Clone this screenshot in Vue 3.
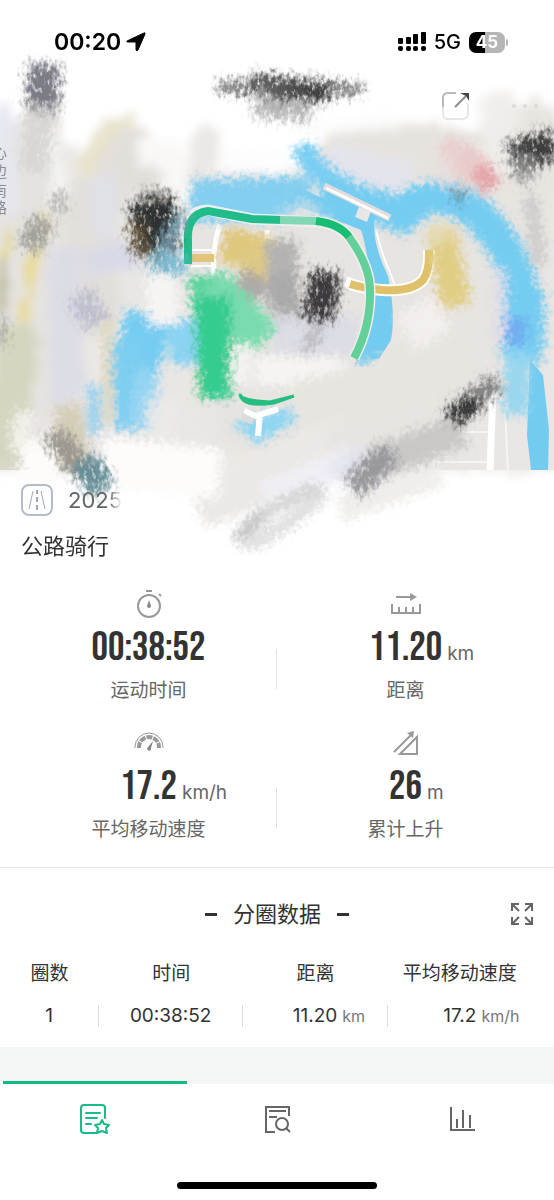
<script setup>
import { ref } from 'vue'

const activeTab = ref('detail')

const tabs = [
  { id: 'detail', name: '详情' },
  { id: 'review', name: '分析' },
  { id: 'chart', name: '图表' },
]

const metrics = [
  { icon: 'timer', value: '00:38:52', unit: '', label: '运动时间' },
  { icon: 'distance', value: '11.20', unit: 'km', label: '距离' },
  { icon: 'speed', value: '17.2', unit: 'km/h', label: '平均移动速度' },
  { icon: 'ascent', value: '26', unit: 'm', label: '累计上升' },
]

const laps = ref([
  { no: 1, time: '00:38:52', distance: '11.20', speed: '17.2' },
])

// wide washes below the map lines: d, color, width, opacity
const washes = [
  ['M20 150 L16 420', '#e5e3e2', 60, 1],
  ['M42 120 L50 400', '#e5e3e0', 40, 1],
  ['M3 120 L4 200', '#e6e7ef', 26, 0.9],
  ['M126 155 Q100 190 92 300', '#e2dfdb', 70, 1],
  ['M112 130 Q135 128 146 142', '#e2dfdc', 20, 0.9],
  ['M86 170 Q98 132 126 122', '#e9e4cb', 18, 0.8],
  ['M104 186 L104 222', '#e0e1ec', 30, 0.7],
  ['M150 220 L150 420', '#e9e7e4', 60, 1],
  ['M345 160 Q420 138 490 175', '#e6e3df', 60, 1],
  ['M340 166 L395 176', '#e3e3ed', 38, 0.9],
  ['M530 140 L500 260 L500 400', '#e8e5e1', 80, 1],
  ['M500 112 L500 155', '#efedea', 40, 0.9],
  ['M180 370 L190 450', '#e9e7e4', 60, 1],
  ['M240 270 L450 270 L450 390 L260 400 Z', '#e7e4e1', 100, 1],
  ['M18 340 L8 440', '#d2d4bd', 40, 0.9],
  ['M64 260 L68 390', '#dcdce6', 34, 0.9],
  ['M98 262 L128 256', '#d8d9e8', 28, 0.9],
  ['M34 250 L22 320', '#e5d995', 9, 1],
  ['M46 215 L22 318', '#eadc8b', 7, 0.8],
  ['M12 228 L2 262', '#e6d87f', 10, 0.9],
  ['M2 260 L2 310', '#a9a574', 8, 0.8],
  ['M48 130 Q62 170 54 205', '#f8f7f6', 12, 0.8],
  ['M150 150 Q180 150 180 190', '#f9f8f7', 30, 1],
  ['M165 120 Q240 100 290 150', '#ffffff', 44, 1],
  ['M230 160 L280 164', '#fdfdfd', 24, 1],
  ['M206 140 L202 176', '#e9e6e3', 28, 0.9],
  ['M300 130 L400 120', '#fdfdfd', 16, 0.8],
]

const paint = [
  ['M108 315 L108 425', '#ddd7bb', 10, 0.9],
  ['M94 385 L94 435', '#8dcdf0', 12, 0.9],
  ['M148 314 L134 385', '#74ccf1', 46, 1],
  ['M128 340 L132 430', '#7bcef1', 32, 1],
  ['M150 370 L140 430', '#9bd6f2', 28, 0.8],
  ['M184 320 L188 370', '#80d0f2', 34, 0.9],
  ['M160 275 L164 325', '#f5f4f3', 30, 1],
  ['M178 365 L180 470', '#e9e6e3', 40, 1],
  ['M160 400 L160 460', '#eceae8', 30, 0.8],
  ['M302 145 Q316 180 352 190', '#78cdf2', 22, 1],
  ['M192 191 L310 187', '#83cdef', 22, 1],
  ['M190 206 L290 206', '#83cff1', 30, 1],
  ['M280 217 L306 205 L330 220', '#c8dde6', 12, 0.8],
  ['M320 196 Q370 202 398 214 Q430 190 460 202 Q508 230 524 300', '#75ccf1', 34, 1],
  ['M396 204 L418 224', '#75ccf1', 34, 1],
  ['M522 290 Q526 330 520 360', '#75ccf1', 42, 1],
  ['M518 350 L516 415', '#91d5f1', 26, 0.9],
  ['M514 318 L512 345', '#6ea5f3', 26, 0.8],
  ['M500 270 L500 345', '#dedde8', 12, 0.9],
  ['M222 244 L272 256', '#e0c77e', 36, 1],
  ['M258 250 L252 282', '#deca84', 26, 1],
  ['M440 228 L456 306', '#e1ce85', 30, 1],
  ['M430 226 L446 240', '#e5dcb9', 24, 0.8],
  ['M240 276 L262 296', '#a7a4a3', 26, 0.9],
  ['M281 240 L284 312', '#b4b3b2', 32, 1],
  ['M280 274 L292 326', '#a8a7a7', 28, 0.8],
  ['M272 334 L360 336', '#dcdbe6', 40, 0.9],
  ['M256 370 L345 374', '#f5f4f2', 30, 1],
  ['M204 276 L210 310', '#54d39a', 32, 1],
  ['M210 284 L264 342', '#79dbae', 40, 1],
  ['M212 296 L216 398', '#35cc90', 36, 1],
  ['M242 345 L240 386', '#f3f2f0', 20, 1],
  ['M414 306 L434 340', '#f3f0ed', 44, 0.9],
  ['M296 420 L470 372', '#e8e5e1', 74, 1],
  ['M196 504 L350 440', '#ebe8e5', 52, 1],
  ['M330 455 L440 425', '#e7e4e1', 54, 1],
  ['M265 496 L355 458', '#f0eff4', 28, 1],
  ['M340 510 L440 474', '#eeebe8', 24, 0.9],
  ['M350 474 L462 430', '#c6c4c4', 34, 0.9],
  ['M334 476 L364 452', '#e4e4ee', 26, 0.9],
  ['M238 538 Q265 508 320 486', '#cfcfcf', 12, 0.9],
  ['M246 546 Q286 530 326 490', '#dcdcdc', 14, 0.9],
  ['M20 462 L60 462', '#fdfcfb', 44, 1],
  ['M100 462 L220 474', '#fdfcfb', 50, 1],
  ['M26 410 L18 450', '#f6f5f1', 20, 0.8],
  ['M68 405 L76 470', '#d4ceb9', 28, 1],
  ['M436 172 L478 182', '#e6dddb', 24, 0.7],
  ['M444 142 Q462 155 468 180', '#eac8c7', 22, 0.7],
  ['M478 166 L492 188', '#e39fa3', 22, 0.9],
  ['M464 150 L482 166', '#e8c9c7', 18, 0.9],
  ['M530 195 L540 265', '#c8c6c5', 14, 0.8],
]

// dry brush marks, drawn with broken edges
const dryMarks = [
  ['M44 64 L42 114', '#7b7b86', 32, 1],
  ['M42 106 L34 172', '#d5d3d1', 28, 0.8],
  ['M218 87 L362 89', '#666', 10, 1],
  ['M250 84 L330 92', '#4a4a4a', 20, 1],
  ['M254 102 L312 106', '#a6a6a6', 30, 0.8],
  ['M270 95 L322 95', '#2a2a2a', 8, 1],
  ['M510 158 L554 144', '#3c3c3d', 30, 1],
  ['M514 168 L534 166', '#8c8c8c', 28, 0.8],
  ['M142 200 L172 208', '#8a8783', 28, 0.9],
  ['M152 200 L158 252', '#2d3132', 44, 1],
  ['M136 222 L142 256', '#63553a', 18, 0.8],
  ['M150 260 L186 266', '#70b7d2', 20, 0.9],
  ['M154 262 L184 214', '#779eaf', 12, 0.9],
  ['M26 228 L46 240', '#a3a19a', 34, 1],
  ['M58 214 L60 192', '#b5b3b0', 14, 0.9],
  ['M80 294 L98 324', '#b9bbcc', 26, 0.9],
  ['M326 272 L318 320', '#3c3b3c', 30, 1],
  ['M320 325 L306 350', '#aaa9ad', 12, 0.7],
  ['M52 434 L86 474', '#9b9890', 24, 1],
  ['M84 460 L102 490', '#678f98', 28, 1],
  ['M448 416 L498 382', '#777', 18, 0.9],
  ['M452 418 L478 402', '#353535', 18, 1],
  ['M352 488 L392 452', '#98979b', 24, 1],
  ['M236 542 L262 512', '#bcbcbc', 8, 0.9],
  ['M2 318 L2 345', '#8f8f88', 8, 0.7],
  ['M458 204 L460 188', '#667c86', 8, 0.8],
]
</script>

<template>
  <div class="page">
    <header class="hero">
      <svg class="map" viewBox="0 0 554 560" preserveAspectRatio="xMidYMin slice" aria-hidden="true">
        <defs>
          <filter id="wash" x="-20" y="0" width="594" height="560" filterUnits="userSpaceOnUse">
            <feTurbulence type="fractalNoise" baseFrequency="0.1" numOctaves="3" seed="4" result="n" />
            <feDisplacementMap in="SourceGraphic" in2="n" scale="24" xChannelSelector="R" yChannelSelector="G" />
            <feGaussianBlur stdDeviation="5" />
          </filter>
          <filter id="brush" x="-20" y="0" width="594" height="560" filterUnits="userSpaceOnUse">
            <feTurbulence type="fractalNoise" baseFrequency="0.2" numOctaves="4" seed="9" result="n" />
            <feGaussianBlur in="SourceGraphic" stdDeviation="4" result="b" />
            <feDisplacementMap in="b" in2="n" scale="18" xChannelSelector="R" yChannelSelector="G" />
          </filter>
          <filter id="dry" x="-20" y="0" width="594" height="560" filterUnits="userSpaceOnUse">
            <feTurbulence type="fractalNoise" baseFrequency="0.25 0.15" numOctaves="3" seed="2" result="n" />
            <feGaussianBlur in="SourceGraphic" stdDeviation="4" result="b" />
            <feDisplacementMap in="b" in2="n" scale="22" xChannelSelector="R" yChannelSelector="G" result="d" />
            <feColorMatrix in="n" type="matrix" values="0 0 0 0 0  0 0 0 0 0  0 0 0 0 0  0 0 3 0 -0.3" result="m" />
            <feComposite in="d" in2="m" operator="in" />
          </filter>
        </defs>

        <path d="M-20 170 L60 145 L130 160 L200 170 L330 150 L574 130 V470 H-20 Z" fill="#ebe8e5" filter="url(#wash)" />
        <rect x="330" y="230" width="224" height="240" fill="#e9e6e3" />
        <rect y="330" width="30" height="140" fill="#d8d9c9" />

        <g filter="url(#wash)" fill="none" stroke-linecap="round">
          <path v-for="w in washes" :key="w[0]" :d="w[0]" :stroke="w[1]" :stroke-width="w[2]" :opacity="w[3]" />
        </g>
        <rect x="330" y="390" width="224" height="80" fill="#e9e6e3" />

        <!-- roads and river -->
        <g fill="none" stroke="#fff">
          <path d="M220 225 Q212 246 214 275 M267 230 V258" stroke-width="5" />
          <path d="M190 250 H216 M190 266 H216" stroke-width="2" />
          <path d="M192 258 H214" stroke="#e3c47b" stroke-width="8" />
          <path d="M434 440 L434 470 M434 432 H487 M434 462 H487 M505 410 L508 470" stroke="#f6f5f4" stroke-width="2" />
          <path d="M493 390 L490 470" stroke-width="7" />
        </g>
        <path d="M530 360 L543 375 L549 430 L548 470 H531 L527 435 Z" fill="#73cbf0" />
        <path d="M274 203 L299 187 L334 204 L355 211 Q377 211 374 224 Q374 248 388 276 Q396 314 391 340 L374 367 H354 L373 315 Q378 290 367 256 Q364 238 361 230 L334 219 L300 207 L286 216 Z" fill="#73cbf0" />
        <path d="M376 230 Q382 256 390 272 L397 292" fill="none" stroke="#fff" stroke-width="2" />
        <path d="M345 282 Q362 289 382 290 Q412 292 423 280 Q430 270 429 250" fill="none" stroke="#fff" stroke-width="12" />
        <path d="M350 284 Q362 288 382 290 Q412 292 423 280 Q430 270 429 250" fill="none" stroke="#e0c16b" stroke-width="8" />

        <g filter="url(#brush)" fill="none" stroke-linecap="butt">
          <path v-for="p in paint" :key="p[0]" :d="p[0]" :stroke="p[1]" :stroke-width="p[2]" :opacity="p[3]" />
        </g>
        <path d="M324 186 L390 218" stroke="#e1dcdb" stroke-width="7" />
        <path d="M326 188 L388 218" stroke="#fff" stroke-width="3" />
        <path d="M359 207 L371 211 L367 222 L355 217 Z" fill="#e9e6e3" />

        <!-- ride track -->
        <g fill="none" stroke-width="8">
          <path d="M186 260 V242 Q184 210 208 210 L252 219 L318 222 Q343 224 354 244 Q370 270 370 290 Q371 326 354 358" stroke="#eee" stroke-width="11" />
          <path d="M188 264 V242 Q186 214 208 211 L252 219 L282 220" stroke="#20bd8a" />
          <path d="M280 220 L318 221" stroke="#82d7b5" />
          <path d="M316 221 Q340 224 349 237" stroke="#16bd73" />
          <path d="M349 237 Q370 266 370 290 Q371 326 354 358" stroke="#63cf99" />
        </g>
        <path d="M232 424 L258 416 L290 408 L296 420 L258 444 Z" fill="#8dd5f2" filter="url(#brush)" />
        <path d="M244 411 L256 416 L278 409 M260 412 L258 436" fill="none" stroke="#fff" stroke-width="6" />
        <path d="M242 412 L254 420 L252 424 L242 421 Z" fill="#dedcdb" />
        <path d="M240 394 Q240 400 270 402 L294 396 L274 403 Q242 408 240 394 Z" fill="#25be80" stroke="#25be80" stroke-width="3" />

        <g filter="url(#dry)" fill="none" stroke-linecap="butt">
          <path v-for="m in dryMarks" :key="m[0]" :d="m[0]" :stroke="m[1]" :stroke-width="m[2]" :opacity="m[3]" />
        </g>
        <text class="street" fill="#8c8c93">
          <tspan x="-8" y="158">心</tspan>
          <tspan x="-8" y="177">边</tspan>
          <tspan x="-8" y="196">南</tspan>
          <tspan x="-8" y="213">路</tspan>
        </text>
      </svg>

      <div class="status-bar">
        <div class="status-left">
          <span class="clock">00:20</span>
          <svg width="20" height="20" viewBox="0 0 20 20"><path d="M18 1 L1 9 Q0 10 2 10 H9 Q10 10 10 11 V18 Q11 20 12 18 L19 2 Q19 0 18 1 Z" fill="#000" stroke="#000" /></svg>
        </div>
        <div class="status-right">
          <svg width="28" height="20" viewBox="0 0 28 20">
            <rect x="0" y="6" width="5" height="6" rx="1" />
            <rect x="8" y="5" width="5" height="7" rx="1" />
            <rect x="15" y="2" width="5" height="10" rx="1" />
            <rect x="23" y="0" width="5" height="12" rx="1" />
            <rect v-for="x in [0, 8, 15, 23]" :key="x" :x="x" y="14" width="5" height="5" rx="2" />
          </svg>
          <span class="network">5G</span>
          <div class="battery"><span class="level">45</span></div>
        </div>
      </div>

      <div class="toolbar">
        <button class="icon-btn" aria-label="分享">
          <svg width="28" height="28" viewBox="0 0 28 28" fill="none" stroke-width="2">
            <path d="M1 15 V6 Q1 1 6 1 H14" stroke="#b9b9b9" />
            <path d="M1 15 V22 Q1 27 6 27 H20 Q26 27 26 21 V11" stroke="#e6e6e6" />
            <path d="M13 15 L24 4" stroke="#8c8c8c" />
            <path d="M18 1 H27 V9 L24 4 Z" fill="#444" />
          </svg>
        </button>
        <button class="icon-btn" aria-label="更多">
          <svg width="28" height="28" viewBox="0 0 28 28" fill="#dcdad8">
            <circle cx="3" cy="14" r="2" /><circle cx="14" cy="14" r="2" /><circle cx="25" cy="14" r="2" />
          </svg>
        </button>
      </div>
    </header>

    <main>
      <section class="ride">
        <div class="ride-date">
          <svg width="32" height="32" viewBox="0 0 32 32" fill="none" stroke="#a0a9b6">
            <rect x="1" y="1" width="30" height="30" rx="7" stroke="#b3bcc9" stroke-width="2" />
            <path d="M12 7 L8 25 M20 7 L24 25" />
            <path d="M16 6 V10 M16 13 V18 M16 21 V26" stroke-width="2" />
          </svg>
          <span>2025</span>
        </div>
        <h1>公路骑行</h1>
      </section>

      <section class="metrics">
        <div class="metric" v-for="metric in metrics" :key="metric.label">
          <div class="metric-icon">
            <svg v-if="metric.icon === 'timer'" width="28" height="30" viewBox="0 0 28 30" fill="none" stroke="#999" stroke-width="2">
              <circle cx="14" cy="17" r="11" />
              <path d="M11 2 H17 M24 5 L26 7" />
              <path d="M14 11 L16 17 A2 2 0 1 1 12 17 Z" fill="#888" stroke="none" />
            </svg>
            <svg v-else-if="metric.icon === 'distance'" width="30" height="30" viewBox="0 0 30 30" fill="none" stroke="#999" stroke-width="2">
              <path d="M1 15 V24 H29 V15 M8 18 V24 M15 18 V24 M22 18 V24" />
              <path d="M5 8 H20" />
              <path d="M19 4 L26 8 L19 12 Z" fill="#999" stroke="none" />
            </svg>
            <svg v-else-if="metric.icon === 'speed'" width="30" height="30" viewBox="0 0 30 30" fill="none" stroke="#999">
              <path d="M1 20 V19 A14 14 0 0 1 29 19 V20" stroke-width="1" />
              <path d="M5 20 V19 A10 10 0 0 1 25 19 V20" stroke-width="4" stroke-dasharray="6 1" />
              <path d="M19 13 L17 20 A2 2 0 1 1 14 19 Z" fill="#888" stroke="none" />
            </svg>
            <svg v-else width="28" height="30" viewBox="0 0 28 30" fill="none" stroke="#999" stroke-width="2">
              <path d="M8 26 L25 9 V26 Z" />
              <path d="M2 24 L19 7" />
              <path d="M15 5 L22 3 L21 10 Z" fill="#999" stroke="none" />
            </svg>
          </div>
          <div class="metric-value">
            <strong>{{ metric.value }}</strong>
            <span>{{ metric.unit }}</span>
          </div>
          <div class="metric-label">{{ metric.label }}</div>
        </div>
      </section>

      <section class="laps">
        <div class="laps-head">
          <h2>分圈数据</h2>
          <button class="icon-btn" aria-label="展开">
            <svg width="24" height="24" viewBox="0 0 24 24" fill="none" stroke="#666" stroke-width="2">
              <path d="M2 9 V2 H9 M2 2 L9 9 M15 2 H22 V9 M22 2 L15 9 M2 15 V22 H9 M2 22 L9 15 M22 15 V22 H15 M22 22 L15 15" />
            </svg>
          </button>
        </div>
        <table>
          <thead>
            <tr>
              <th class="col-no">圈数</th>
              <th>时间</th>
              <th>距离</th>
              <th>平均移动速度</th>
            </tr>
          </thead>
          <tbody>
            <tr v-for="lap in laps" :key="lap.no">
              <td><div class="cell"><b>{{ lap.no }}</b></div></td>
              <td><div class="cell"><b>{{ lap.time }}</b></div></td>
              <td><div class="cell"><b>{{ lap.distance }}</b><span>km</span></div></td>
              <td><div class="cell"><b>{{ lap.speed }}</b><span>km/h</span></div></td>
            </tr>
          </tbody>
        </table>
      </section>
      <div class="band"></div>
    </main>

    <nav class="tab-bar">
      <button
        v-for="tab in tabs"
        :key="tab.id"
        class="tab"
        :class="{ active: activeTab === tab.id }"
        :aria-label="tab.name"
        @click="activeTab = tab.id"
      >
        <svg v-if="tab.id === 'detail'" width="30" height="30" viewBox="0 0 30 30" fill="none" stroke="currentColor" stroke-width="2" stroke-linecap="round" stroke-linejoin="round">
          <path d="M25 14 V4 Q25 1 22 1 H4 Q1 1 1 4 V26 Q1 29 4 29 H17" />
          <path d="M6 9 H20 M6 14 H17 M6 20 H11" />
          <path d="M22 16 L24 20 L29 21 L26 24 L27 29 L22 27 L17 29 L18 24 L15 21 L20 20 Z" />
        </svg>
        <svg v-else-if="tab.id === 'review'" width="30" height="30" viewBox="0 0 30 30" fill="none" stroke="currentColor" stroke-width="2">
          <path d="M26 12 V3 H3 V28 H12 M6 7 H23 M6 13 H14" />
          <circle cx="19" cy="20" r="6" />
          <path d="M23 24 L27 28" />
        </svg>
        <svg v-else width="30" height="30" viewBox="0 0 30 30" fill="none" stroke="currentColor" stroke-width="2">
          <path d="M4 3 V26 H28 M10 15 V24 M16 6 V24 M23 11 V24" />
        </svg>
      </button>
    </nav>
    <div class="home-indicator"></div>
  </div>
</template>

<style>
body {
  background: #fff;
}
</style>

<style scoped>
.page {
  font-family: Inter, "Noto Sans CJK SC", sans-serif;
  color: #333;
  background: #fff;
  overflow: hidden;
}

h1, h2 {
  margin: 0;
  font-size: 22px;
  line-height: 32px;
  font-weight: 400;
}

button {
  border: none;
  background: none;
  padding: 0;
  cursor: pointer;
}

svg {
  display: block;
}

.hero {
  position: relative;
  height: 476px;
}

.map {
  position: absolute;
  top: 0;
  left: 0;
  width: 100%;
  height: 560px;
}

.street {
  font-size: 15px;
}

.status-bar {
  position: relative;
  display: flex;
  justify-content: space-between;
  align-items: center;
  padding: 26px 46px 0 54px;
  height: 32px;
  color: #000;
}

.status-left, .status-right {
  display: flex;
  align-items: center;
  gap: 8px;
}

.status-left {
  gap: 5px;
}

.clock {
  font-size: 23px;
  font-weight: 600;
}

.network {
  font-size: 20px;
  font-weight: 500;
}

.battery {
  position: relative;
  display: flex;
  margin-right: 3px;
}

.battery::after {
  content: "";
  position: absolute;
  right: -3px;
  top: 7px;
  width: 2px;
  height: 7px;
  border-radius: 0 2px 2px 0;
  background: #b5b5b5;
}

.level {
  width: 36px;
  line-height: 21px;
  border-radius: 7px;
  background: linear-gradient(90deg, #000 45%, #b5b5b5 45%);
  color: #fff;
  text-align: center;
  font-size: 17px;
  font-weight: 700;
}

.toolbar {
  position: relative;
  display: flex;
  justify-content: flex-end;
  gap: 41px;
  padding: 34px 15px 0;
}

.ride {
  position: relative;
  padding: 8px 21px 0;
}

.ride-date {
  display: flex;
  align-items: center;
  gap: 15px;
  font-size: 22px;
  color: #666;
}

.ride-date span {
  mask-image: linear-gradient(90deg, #000 75%, transparent);
}

.ride h1 {
  margin-top: 14px;
}

.metrics {
  display: grid;
  grid-template-columns: 1fr 1fr;
  padding: 27px 20px 0;
}

.metric {
  position: relative;
  height: 139px;
}

.metric:nth-child(odd)::after {
  content: "";
  position: absolute;
  right: 0;
  top: 60px;
  width: 1px;
  height: 40px;
  background: #e2e2e2;
}

.metric-icon {
  display: flex;
  justify-content: center;
}

.metric-value, .cell {
  display: grid;
  grid-template-columns: 1fr auto 1fr;
  align-items: baseline;
}

.metric-value {
  column-gap: 5px;
  height: 58px;
}

.metric-value strong {
  grid-column: 2;
  font-family: "Bebas Neue", Roboto, sans-serif;
  font-size: 41px;
  line-height: 58px;
  font-weight: 400;
}

.metric-value span {
  font-size: 19px;
  color: #666;
}

.metric-label {
  font-size: 19px;
  line-height: 28px;
  text-align: center;
  color: #666;
}

.laps {
  border-top: 1px solid #e4e4e4;
  padding-bottom: 8px;
}

.laps-head {
  display: grid;
  grid-template-columns: 1fr auto 1fr;
  align-items: center;
  padding: 30px 20px 0;
}

.laps-head h2 {
  grid-column: 2;
  display: flex;
  align-items: center;
  gap: 16px;
}

.laps-head h2::before, .laps-head h2::after {
  content: "";
  width: 12px;
  height: 3px;
  background: #333;
}

.laps-head .icon-btn {
  justify-self: end;
}

table {
  width: 100%;
  padding-right: 22px;
  margin-top: 19px;
  border-collapse: separate;
  border-spacing: 0;
  table-layout: fixed;
}

th, td {
  padding: 0;
  height: 44px;
  font-size: 19px;
  font-weight: 400;
  text-align: center;
  white-space: nowrap;
}

td {
  height: 46px;
}

.col-no {
  width: 99px;
}

.cell {
  column-gap: 5px;
  line-height: 22px;
  border-right: 1px solid #ddd;
}

td:last-child .cell {
  border-right: none;
}

.cell b {
  grid-column: 2;
  font-weight: 400;
}

.cell span {
  font-size: 16px;
  text-align: left;
  color: #777;
}

.band {
  height: 34px;
  background: #f4f6f5;
}

.tab-bar {
  display: grid;
  grid-template-columns: repeat(3, 1fr);
  padding-left: 3px;
}

.tab {
  display: flex;
  justify-content: center;
  border-top: 3px solid #f5f5f5;
  padding: 20px 0;
  color: #666;
}

.tab.active {
  border-color: #10bd7f;
  color: #17bd82;
}

.home-indicator {
  width: 36%;
  height: 7px;
  margin: 28px auto 11px;
  border-radius: 4px;
  background: #000;
}
</style>
